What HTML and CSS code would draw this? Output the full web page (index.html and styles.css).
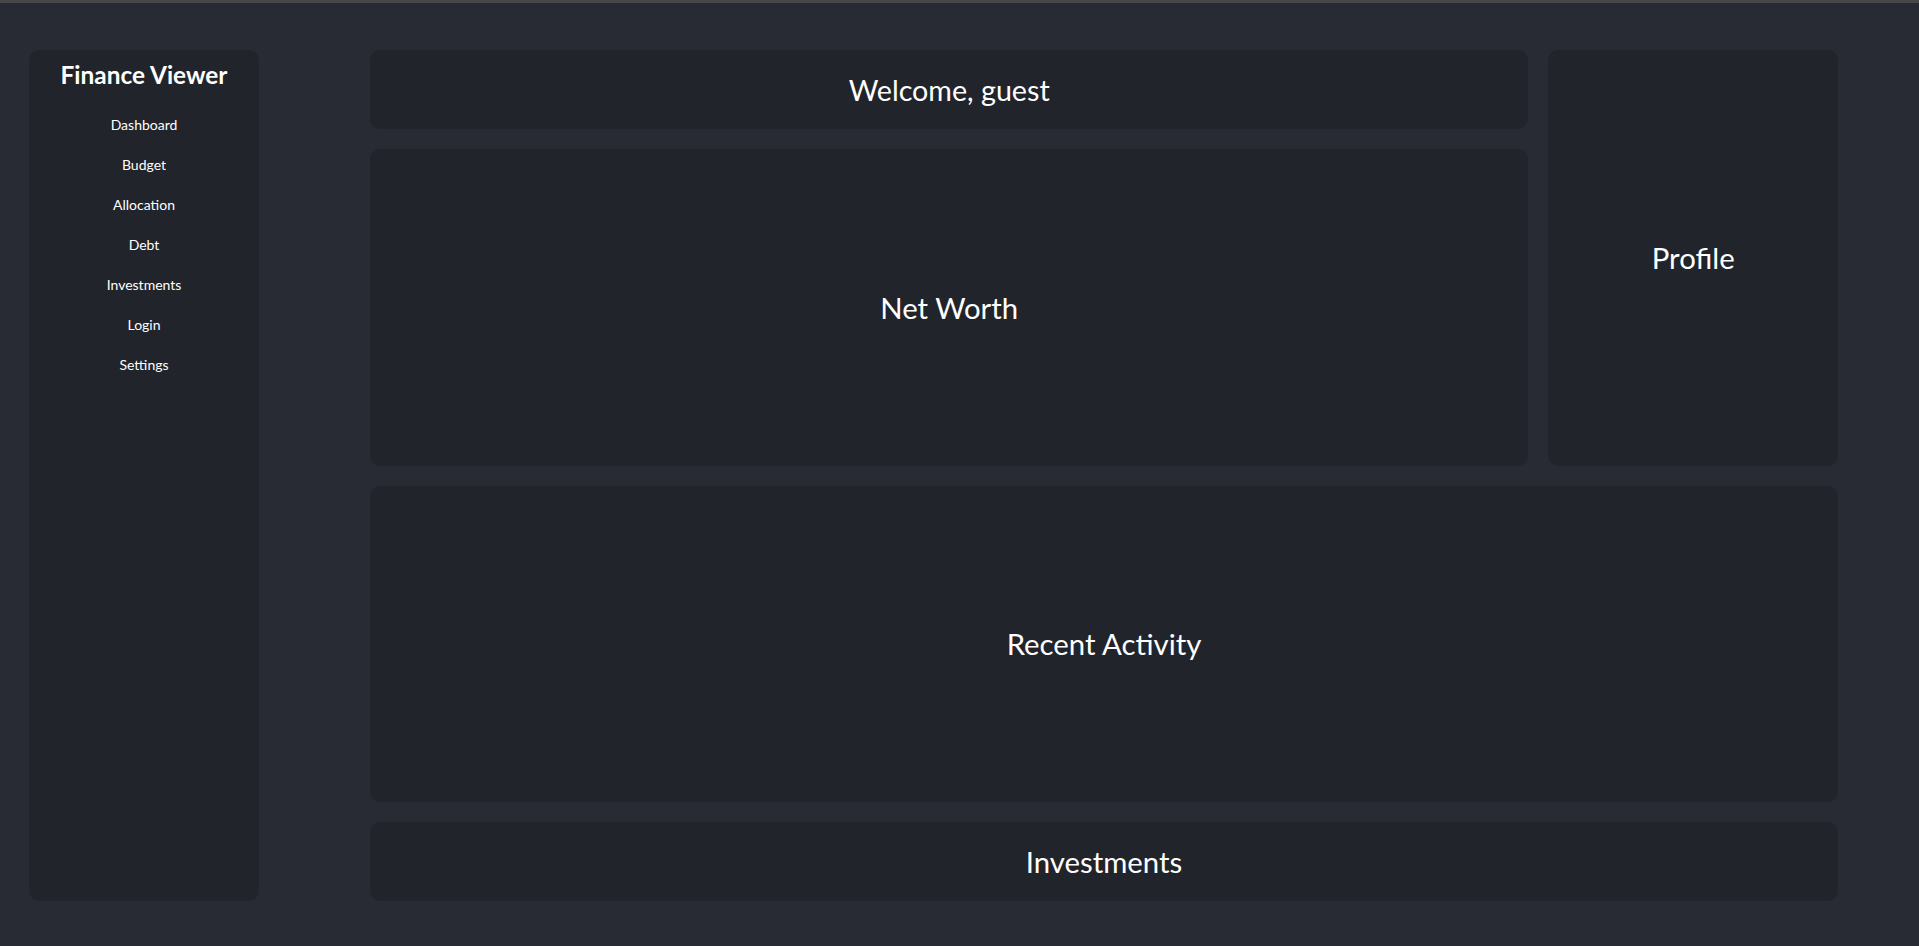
FILE: index.html
```html
<!DOCTYPE html>
<html lang="en">
<head>
<meta charset="utf-8">
<title>Finance Viewer</title>
<link rel="stylesheet" href="styles.css">
</head>
<body>
<div class="app">
  <aside class="sidebar">
    <h1 class="brand">Finance Viewer</h1>
    <nav class="nav">
      <a class="nav-item" href="#">Dashboard</a>
      <a class="nav-item" href="#">Budget</a>
      <a class="nav-item" href="#">Allocation</a>
      <a class="nav-item" href="#">Debt</a>
      <a class="nav-item" href="#">Investments</a>
      <a class="nav-item" href="#">Login</a>
      <a class="nav-item" href="#">Settings</a>
    </nav>
  </aside>
  <main class="dashboard">
    <section class="card card-welcome">Welcome, guest</section>
    <section class="card card-profile">Profile</section>
    <section class="card card-networth">Net Worth</section>
    <section class="card card-recent">Recent Activity</section>
    <section class="card card-invest">Investments</section>
  </main>
</div>
</body>
</html>
```
FILE: styles.css
```css
* { box-sizing: border-box; }
html, body { margin: 0; padding: 0; }
body {
  background: #282b33;
  border-top: 3px solid #474747;
  font-family: Lato, "Open Sans", sans-serif;
  color: #ffffff;
  height: 100vh;
}
.app {
  display: flex;
  gap: 111px;
  height: 100%;
  padding: 47px 81px 45px 29px;
}
.sidebar {
  width: 230px;
  flex: none;
  background: #22242b;
  border-radius: 10px;
  padding-top: 10px;
  text-align: center;
}
.brand {
  margin: 0;
  font-size: 24.4px;
  font-weight: 700;
  line-height: 29px;
}
.nav {
  display: flex;
  flex-direction: column;
  margin-top: 16px;
}
.nav-item {
  color: #ffffff;
  text-decoration: none;
  font-size: 14px;
  height: 40px;
  line-height: 40px;
}
.dashboard {
  flex: 1;
  display: grid;
  grid-template-columns: 4fr 1fr;
  grid-template-rows: 1fr 4fr 4fr 1fr;
  grid-template-areas:
    "welcome profile"
    "networth profile"
    "recent recent"
    "invest invest";
  gap: 20px;
}
.card {
  background: #22242b;
  border-radius: 10px;
  display: flex;
  align-items: center;
  justify-content: center;
  font-size: 29.33px;
}
.card-welcome { grid-area: welcome; font-size: 28.7px; }
.card-profile { grid-area: profile; }
.card-networth { grid-area: networth; }
.card-recent { grid-area: recent; }
.card-invest { grid-area: invest; }
```
